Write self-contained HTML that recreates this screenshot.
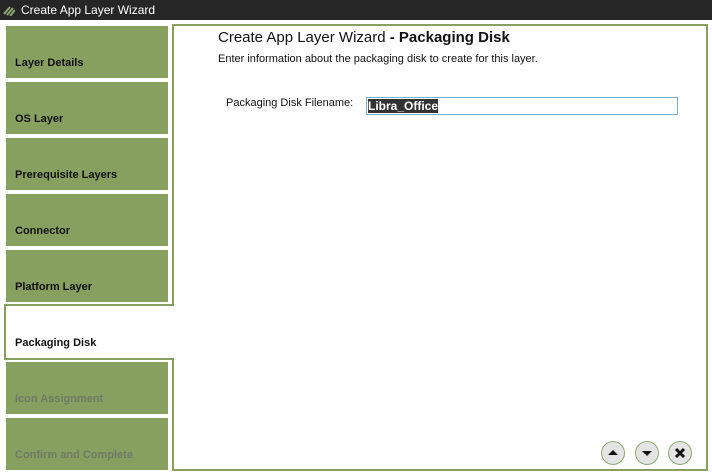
<!DOCTYPE html>
<html><head><style>
body{margin:0;width:712px;height:473px;background:#fff;font-family:"Liberation Sans",Arial,sans-serif;position:relative;overflow:hidden}
.bar{position:absolute;left:0;top:0;width:712px;height:20px;background:#262626;color:#fff;font-size:12px;line-height:20px}
.bar span{position:absolute;left:21px;top:0}
.tab{position:absolute;left:6px;width:162px;height:52px;background:#87a060;font-size:11px;font-weight:bold;color:#111}
.tab span{position:absolute;left:9px;bottom:9px}
.dis{color:#6e7a66}
.g{position:absolute;background:#87a060}
.btn{position:absolute;top:441px;width:22px;height:22px;border-radius:50%;background:#e4e4e4;border:1px solid #8faa70}
</style></head><body>
<div class="bar"><svg style="position:absolute;left:3px;top:4px" width="12" height="12"><path d="M1 10L7 3M4 11L10 4M7 12L12 6" stroke="#8faa70" stroke-width="2"/></svg><span>Create App Layer Wizard</span></div>
<div class="tab" style="top:26px"><span>Layer Details</span></div>
<div class="tab" style="top:82px"><span>OS Layer</span></div>
<div class="tab" style="top:138px"><span>Prerequisite Layers</span></div>
<div class="tab" style="top:194px"><span>Connector</span></div>
<div class="tab" style="top:250px"><span>Platform Layer</span></div>
<div style="position:absolute;left:4px;top:304px;width:168px;height:52px;border:2px solid #87a060;border-right:none;background:#fff;font-size:11px;font-weight:bold;color:#111"><span style="position:absolute;left:9px;bottom:9px">Packaging Disk</span></div>
<div class="tab dis" style="top:362px"><span>Icon Assignment</span></div>
<div class="tab dis" style="top:418px"><span>Confirm and Complete</span></div>
<div class="g" style="left:172px;top:24px;width:536px;height:2px"></div>
<div class="g" style="left:706px;top:24px;width:2px;height:447px"></div>
<div class="g" style="left:172px;top:469px;width:536px;height:2px"></div>
<div class="g" style="left:172px;top:24px;width:2px;height:282px"></div>
<div class="g" style="left:172px;top:358px;width:2px;height:113px"></div>
<div style="position:absolute;left:218px;top:29px;font-size:15px;color:#111">Create App Layer Wizard <b>- Packaging Disk</b></div>
<div style="position:absolute;left:218px;top:53px;font-size:11px;color:#111">Enter information about the packaging disk to create for this layer.</div>
<div style="position:absolute;left:226px;top:97px;font-size:11px;color:#111">Packaging Disk Filename:</div>
<div style="position:absolute;left:366px;top:97px;width:310px;height:16px;border:1px solid #7ab0c4"><span style="position:absolute;left:1px;top:1px;background:#333;color:#fff;font-size:12px;font-weight:bold;line-height:14px">Libra_Office</span></div>
<div class="btn" style="left:601px"><svg width="22" height="22"><path d="M6 13L11 8L16 13Z" fill="#111"/></svg></div>
<div class="btn" style="left:635px"><svg width="22" height="22"><path d="M6 9L11 14L16 9Z" fill="#111"/></svg></div>
<div class="btn" style="left:668px"><svg width="22" height="22"><path d="M7 7L15 15M15 7L7 15" stroke="#111" stroke-width="3"/></svg></div>
</body></html>
